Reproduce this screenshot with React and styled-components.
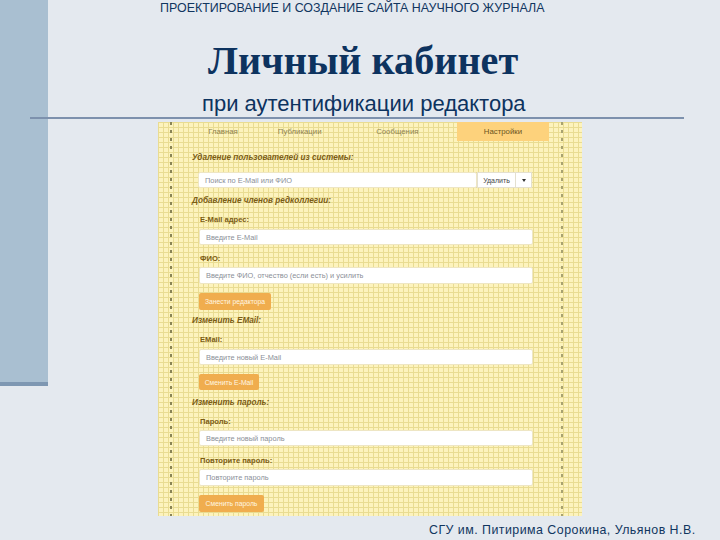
import React from "react";
import styled, { createGlobalStyle } from "styled-components";

const Global = createGlobalStyle`
  html, body { margin: 0; padding: 0; }
  body { width: 720px; height: 540px; overflow: hidden; background: #e4e9ef; font-family: "Liberation Sans", Arial, sans-serif; }
`;
const Slide = styled.div`
  display: flex; width: 720px; height: 540px; background: #e4e9ef; overflow: hidden;
`;
const SideBar = styled.div`
  flex: 0 0 48px; height: 382px; background: #a9bfd1; border-bottom: 4px solid #7e97b2;
`;
const Main = styled.div`
  flex: 1; display: flex; flex-direction: column; align-items: center; min-width: 0;
`;
const Course = styled.div`
  width: 100%; padding-left: 112px; box-sizing: border-box; height: 22px; padding-top: 1px;
  font-size: 12.45px; line-height: 14px; color: #11365f; white-space: nowrap;
`;
const Title = styled.h1`
  margin: 0; height: 70px; width: 100%; padding-left: 160px; box-sizing: border-box;
  font: bold 40.2px/42px "Liberation Serif", serif; color: #0d335f; white-space: nowrap; padding-top: 18px;
`;
const Subtitle = styled.div`
  width: 100%; box-sizing: border-box; padding-left: 154px; height: 25px;
  font-size: 22px; line-height: 24px; color: #0d335f; white-space: nowrap;
`;
const Rule = styled.div`
  align-self: flex-start; margin-left: -18px; width: 654px; height: 2px; background: #7d91ad; flex: none;
`;
const Panel = styled.div`
  align-self: flex-start; margin: 3px 0 0 110px; width: 424px; height: 394px; box-sizing: border-box; flex: none;
  padding: 0 33px 0 34px;
  background-color: #fdf3bd;
  background-image:
    repeating-linear-gradient(to bottom, #8a8455 0 3px, transparent 3px 8px),
    repeating-linear-gradient(to bottom, #a8a270 0 3px, transparent 3px 8px),
    repeating-linear-gradient(to right, #e9dc92 0 1px, transparent 1px 5px),
    repeating-linear-gradient(to bottom, #e9dc92 0 1px, transparent 1px 5px);
  background-size: 2px 100%, 2px 100%, auto, auto;
  background-position: 12px 0, 403px 0, 0 0, 0 0;
  background-repeat: no-repeat, no-repeat, repeat, repeat;
`;
const Tabs = styled.div`
  display: grid; grid-template-columns: 62px 76px 104px 92px; column-gap: 7.67px; height: 19px; width: 357px; box-sizing: border-box;
`;
const Tab = styled.div`
  display: flex; align-items: center; justify-content: center; font-size: 7.8px;
  color: ${p => p.$active ? "#6b5420" : "#8f8350"};
  background: ${p => p.$active ? "#fdd27c" : "transparent"};
`;
const Section = styled.div`margin-top: ${p => p.$top}px;`;
const Heading = styled.div`
  font-size: 8.2px; line-height: 10px; font-weight: bold; font-style: italic; color: #7b5c14; white-space: nowrap;
`;
const Field = styled.div`margin: ${p => p.$top}px 0 0 7px; width: 334px;`;
const Label = styled.div`
  font-size: 7.6px; line-height: 9px; font-weight: bold; color: #7b5c14; margin-left: 1px; margin-bottom: ${p => p.$gap}px;
`;
const Input = styled.div`
  height: ${p => p.$h}px; display: flex; align-items: center; padding-left: 6px; box-sizing: border-box; flex: 1;
  background: #fff; border: 1px solid #eee6c4; border-radius: 2px;
  font-size: 7.4px; color: #8b8f98; white-space: nowrap;
`;
const Search = styled.div`display: flex; margin: 9px 0 0 6px; width: 334px; height: 16px;`;
const Split = styled.div`
  flex: none; width: ${p => p.$w}px; display: flex; align-items: center; justify-content: center;
  background: #fff; border: 1px solid #e4e0cf; border-left-width: ${p => p.$first ? 1 : 0}px; box-sizing: border-box;
  font-size: 7px; color: #444;
`;
const Caret = styled.span`
  width: 0; height: 0; border-left: 2px solid transparent; border-right: 2px solid transparent; border-top: 3px solid #333;
`;
const Action = styled.div`
  display: flex; align-items: center; justify-content: center; box-sizing: border-box;
  width: ${p => p.$w}px; height: ${p => p.$h}px; margin: ${p => p.$top}px 0 0 7px;
  background: #f0ad4e; border-radius: 2px; color: #fff6e2; font-size: 6.8px; white-space: nowrap;
`;
const Footer = styled.div`
  position: absolute; left: 429px; top: 523px; font-size: 12.4px; line-height: 15px; letter-spacing: .47px; color: #11365f; white-space: nowrap;
`;

const tabs = ["Главная", "Публикации", "Сообщения", "Настройки"];

export default function App() {
  return (
    <Slide>
      <Global />
      <SideBar />
      <Main>
        <Course>ПРОЕКТИРОВАНИЕ И СОЗДАНИЕ САЙТА НАУЧНОГО ЖУРНАЛА</Course>
        <Title>Личный кабинет</Title>
        <Subtitle>при аутентификации редактора</Subtitle>
        <Rule />
        <Panel>
          <Tabs>
            {tabs.map((t, i) => <Tab key={t} $active={i === 3}>{t}</Tab>)}
          </Tabs>
          <Section $top={12}>
            <Heading>Удаление пользователей из системы:</Heading>
            <Search>
              <Input $h={16}>Поиск по E-Mail или ФИО</Input>
              <Split $w={39} $first>Удалить</Split>
              <Split $w={16}><Caret /></Split>
            </Search>
          </Section>
          <Section $top={8}>
            <Heading>Добавление членов редколлегии:</Heading>
            <Field $top={9}><Label $gap={5}>E-Mail адрес:</Label><Input $h={16}>Введите E-Mail</Input></Field>
            <Field $top={9}><Label $gap={4}>ФИО:</Label><Input $h={17}>Введите ФИО, отчество (если есть) и усилить</Input></Field>
            <Action $w={72} $h={17} $top={9}>Занести редактора</Action>
          </Section>
          <Section $top={6}>
            <Heading>Изменить EMail:</Heading>
            <Field $top={9}><Label $gap={5}>EMail:</Label><Input $h={16}>Введите новый E-Mail</Input></Field>
            <Action $w={60} $h={16} $top={9}>Сменить E-Mail</Action>
          </Section>
          <Section $top={8}>
            <Heading>Изменить пароль:</Heading>
            <Field $top={9}><Label $gap={4}>Пароль:</Label><Input $h={16}>Введите новый пароль</Input></Field>
            <Field $top={10}><Label $gap={4}>Повторите пароль:</Label><Input $h={17}>Повторите пароль</Input></Field>
            <Action $w={65} $h={17} $top={9}>Сменить пароль</Action>
          </Section>
        </Panel>
      </Main>
      <Footer>СГУ им. Питирима Сорокина, Ульянов Н.В.</Footer>
    </Slide>
  );
}
